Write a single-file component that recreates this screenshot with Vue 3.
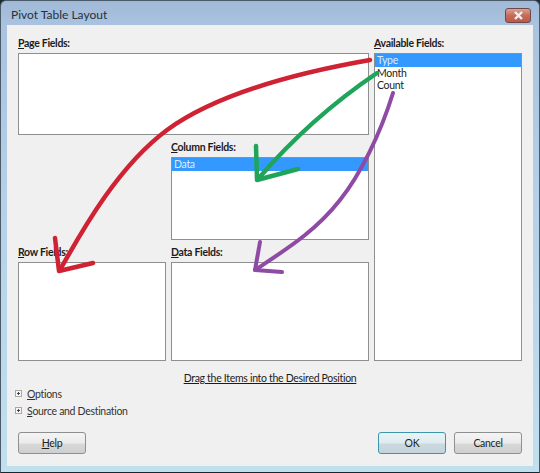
<script setup>
const items = ['Type', 'Month', 'Count']
</script>

<template>
  <div class="window">
    <div class="titlebar">
      <span class="title">Pivot Table Layout</span>
      <button class="close" type="button">
        <svg width="13" height="11" viewBox="0 0 13 11">
          <path d="M3 2 L10 9 M10 2 L3 9" stroke="#f4f0ee" stroke-width="2.4" fill="none" />
        </svg>
      </button>
    </div>

    <div class="client">
      <div class="fields">
        <section class="field page">
          <label><u>P</u>age Fields:</label>
          <div class="box"></div>
        </section>
        <section class="field available">
          <label><u>A</u>vailable Fields:</label>
          <ul class="box">
            <li v-for="(item, i) in items" :key="item" :class="{ selected: i === 0 }">{{ item }}</li>
          </ul>
        </section>
        <section class="field column">
          <label><u>C</u>olumn Fields:</label>
          <ul class="box">
            <li class="selected">Data</li>
          </ul>
        </section>
        <section class="field row">
          <label><u>R</u>ow Fields:</label>
          <div class="box"></div>
        </section>
        <section class="field data">
          <label><u>D</u>ata Fields:</label>
          <div class="box"></div>
        </section>
      </div>

      <p class="hint">Drag the Items into the Desired Position</p>

      <div class="expander">
        <span class="plus"></span><span><u>O</u>ptions</span>
      </div>
      <div class="expander">
        <span class="plus"></span><span><u>S</u>ource and Destination</span>
      </div>

      <div class="buttons">
        <button class="btn" type="button"><u>H</u>elp</button>
        <div class="right">
          <button class="btn default" type="button">OK</button>
          <button class="btn" type="button">Cancel</button>
        </div>
      </div>
    </div>

    <!-- hand-drawn arrows over the dialog -->
    <svg class="arrows" width="540" height="473" viewBox="0 0 540 473" fill="none" stroke-linecap="round" stroke-linejoin="round">
      <g stroke="#cf2233" stroke-width="4.5">
        <path d="M370 60 C290 74 215 95 167 130 C120 165 85 225 60 270" />
        <path d="M55 238 L59 271 L93 263" />
      </g>
      <g stroke="#1fa45a" stroke-width="4.5">
        <path d="M377 73 C340 98 300 130 258 179" />
        <path d="M256 146 L257 180 L298 169" />
      </g>
      <g stroke="#8e4aa5" stroke-width="4">
        <path d="M393 93 C380 135 360 175 340 200 C315 232 285 250 255 270" />
        <path d="M260 242 L255 270 L282 272" />
      </g>
    </svg>
  </div>
</template>

<style>
html, body {
  margin: 0;
  background: #1d2a30;
}
</style>

<style scoped>
* {
  box-sizing: border-box;
}

.window {
  position: relative;
  width: 540px;
  height: 473px;
  padding: 0 7px 7px;
  overflow: hidden;
  border-radius: 6px 6px 0 0;
  border: 1px solid #4b5a68;
  border-bottom-color: #16282e;
  background: linear-gradient(#9fb9d6 0, #a9c3e0 25px, #b5d0e8 200px, #c0e0ee 100%);
  font-family: Lato, "Open Sans", sans-serif;
  font-size: 10.5px;
  letter-spacing: -0.3px;
  color: #1c1c1c;
}

.titlebar {
  display: flex;
  justify-content: space-between;
  align-items: flex-start;
  height: 24px;
  margin: 0 -6px;
  padding: 0 7px 0 9px;
}

.title {
  margin-top: 6px;
  font-size: 12px;
  line-height: 16px;
  letter-spacing: 0;
  color: #27303c;
}

.close {
  display: flex;
  align-items: center;
  justify-content: center;
  width: 26px;
  height: 15px;
  margin-top: 7px;
  padding: 0;
  border: 1px solid #6d4a4a;
  border-radius: 3px;
  background: linear-gradient(#d9a294, #c96a58 50%, #bc5a48);
}

.client {
  height: 441px;
  margin: 0 -1px;
  padding: 12px 11px 0;
  background: #f0f0f0;
}

.fields {
  display: grid;
  grid-template-columns: 148px 198px 148px;
  grid-template-rows: 98px 99px 115px;
  column-gap: 5px;
  row-gap: 6px;
}

.field {
  display: flex;
  flex-direction: column;
  min-height: 0;
}

.field label {
  height: 16px;
  line-height: 12px;
  font-weight: 700;
}

.page {
  grid-column: 1 / 3;
  grid-row: 1;
}

.available {
  grid-column: 3;
  grid-row: 1 / 4;
}

.column {
  grid-column: 2;
  grid-row: 2;
}

.row {
  grid-column: 1;
  grid-row: 3;
}

.data {
  grid-column: 2;
  grid-row: 3;
}

.box {
  flex: 1;
  margin: 0;
  padding: 0;
  list-style: none;
  background: #fff;
  border: 1px solid #8e8f8f;
}

.box li {
  height: 12.5px;
  padding-left: 2px;
  line-height: 12.5px;
}

.box li.selected {
  background: #3399ff;
  color: #dcecff;
}

.hint {
  margin: 10px 0 0;
  height: 14px;
  line-height: 14px;
  text-align: center;
  text-decoration: underline;
}

.expander {
  display: flex;
  align-items: center;
  gap: 5px;
  height: 17px;
  margin-left: -3px;
  color: #333;
}

.expander:first-of-type {
  margin-top: 2px;
}

.plus {
  position: relative;
  width: 7px;
  height: 7px;
  border: 1px solid #a8a8a8;
  background: #f7f7f7;
}

.plus::before {
  content: '';
  position: absolute;
  left: 1px;
  top: 2px;
  width: 3px;
  height: 1px;
  background: #444;
}

.plus::after {
  content: '';
  position: absolute;
  left: 2px;
  top: 1px;
  width: 1px;
  height: 3px;
  background: #444;
}

.buttons {
  display: flex;
  justify-content: space-between;
  margin-top: 13px;
}

.right {
  display: flex;
  gap: 8px;
}

.btn {
  width: 68px;
  height: 22px;
  padding: 0;
  border: 1px solid #8e8f8f;
  border-radius: 3px;
  background: linear-gradient(#f4f4f4, #ebebeb 50%, #d8d8d8 55%, #cfcfcf);
  font-family: inherit;
  font-size: inherit;
  letter-spacing: inherit;
  color: #222;
}

.btn.default {
  border-color: #3c97ad;
  background: linear-gradient(#eaf4f7, #e0ebef 50%, #c9d9df 55%, #c4d4da);
}

.arrows {
  position: absolute;
  left: -1px;
  top: -1px;
  pointer-events: none;
}
</style>
